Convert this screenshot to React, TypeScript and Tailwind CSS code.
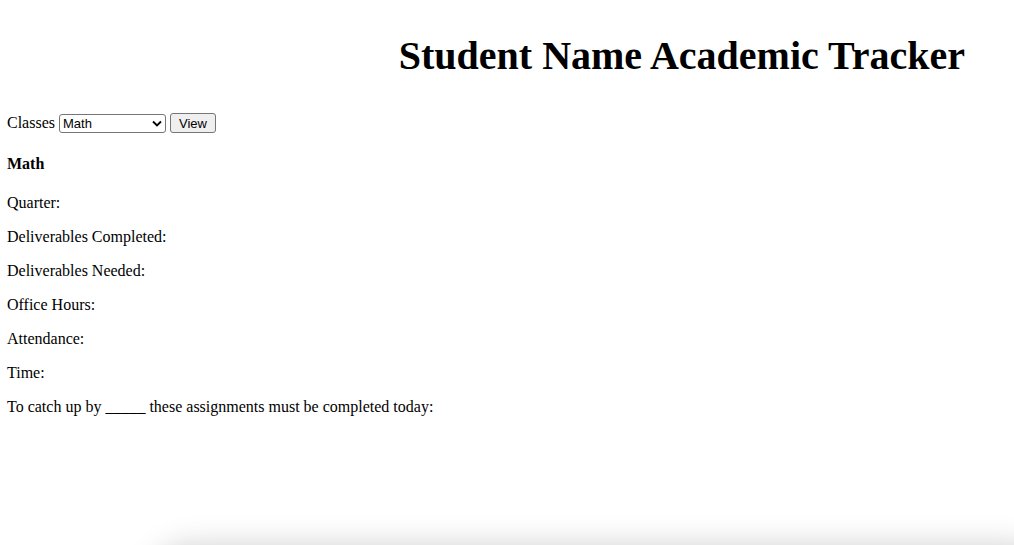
import React from "react";

export default function App() {
  const rows = [
    "Quarter:",
    "Deliverables Completed:",
    "Deliverables Needed:",
    "Office Hours:",
    "Attendance:",
    "Time:",
    "To catch up by _____ these assignments must be completed today:",
  ];
  return (
    <div
      className="relative w-[1014px] h-[545px] overflow-hidden bg-white text-black text-[16px] leading-[18px]"
      style={{ fontFamily: '"Liberation Serif", "Times New Roman", serif' }}
    >
      <div className="px-[7px]">
        <h1 className="text-right pr-[42px] pt-[33px] text-[40px] font-bold leading-[1.15]">
          Student Name Academic Tracker
        </h1>
        <div className="mt-[33px] flex items-center h-[22px]">
          <span>Classes</span>
          <div className="relative ml-[4px]">
            <select
              className="appearance-none w-[107px] h-[19px] border border-[#767676] rounded-[3px] bg-white pl-[3px] text-[13px] leading-none"
              style={{ fontFamily: '"Liberation Sans", Arial, sans-serif' }}
              defaultValue="Math"
            >
              <option>Math</option>
            </select>
            <svg
              className="absolute right-[4px] top-[6px] pointer-events-none"
              width="10"
              height="7"
              viewBox="0 0 10 7"
            >
              <path d="M1 1.5 L5 5.5 L9 1.5" fill="none" stroke="#000" strokeWidth="1.8" />
            </svg>
          </div>
          <button
            className="ml-[4px] h-[20px] px-[8px] border border-[#767676] rounded-[3px] bg-[#efefef] text-[13px] leading-none"
            style={{ fontFamily: '"Liberation Sans", Arial, sans-serif' }}
          >
            View
          </button>
        </div>
        <h4 className="mt-[21px] font-bold">Math</h4>
        <div className="mt-[21px] flex flex-col gap-[16px]">
          {rows.map((r) => (
            <p key={r}>{r}</p>
          ))}
        </div>
      </div>
      <div className="absolute left-[150px] right-[-40px] top-[545px] h-[200px] rounded-[40px] shadow-[0_0_30px_rgba(0,0,0,0.18)]" />
    </div>
  );
}
